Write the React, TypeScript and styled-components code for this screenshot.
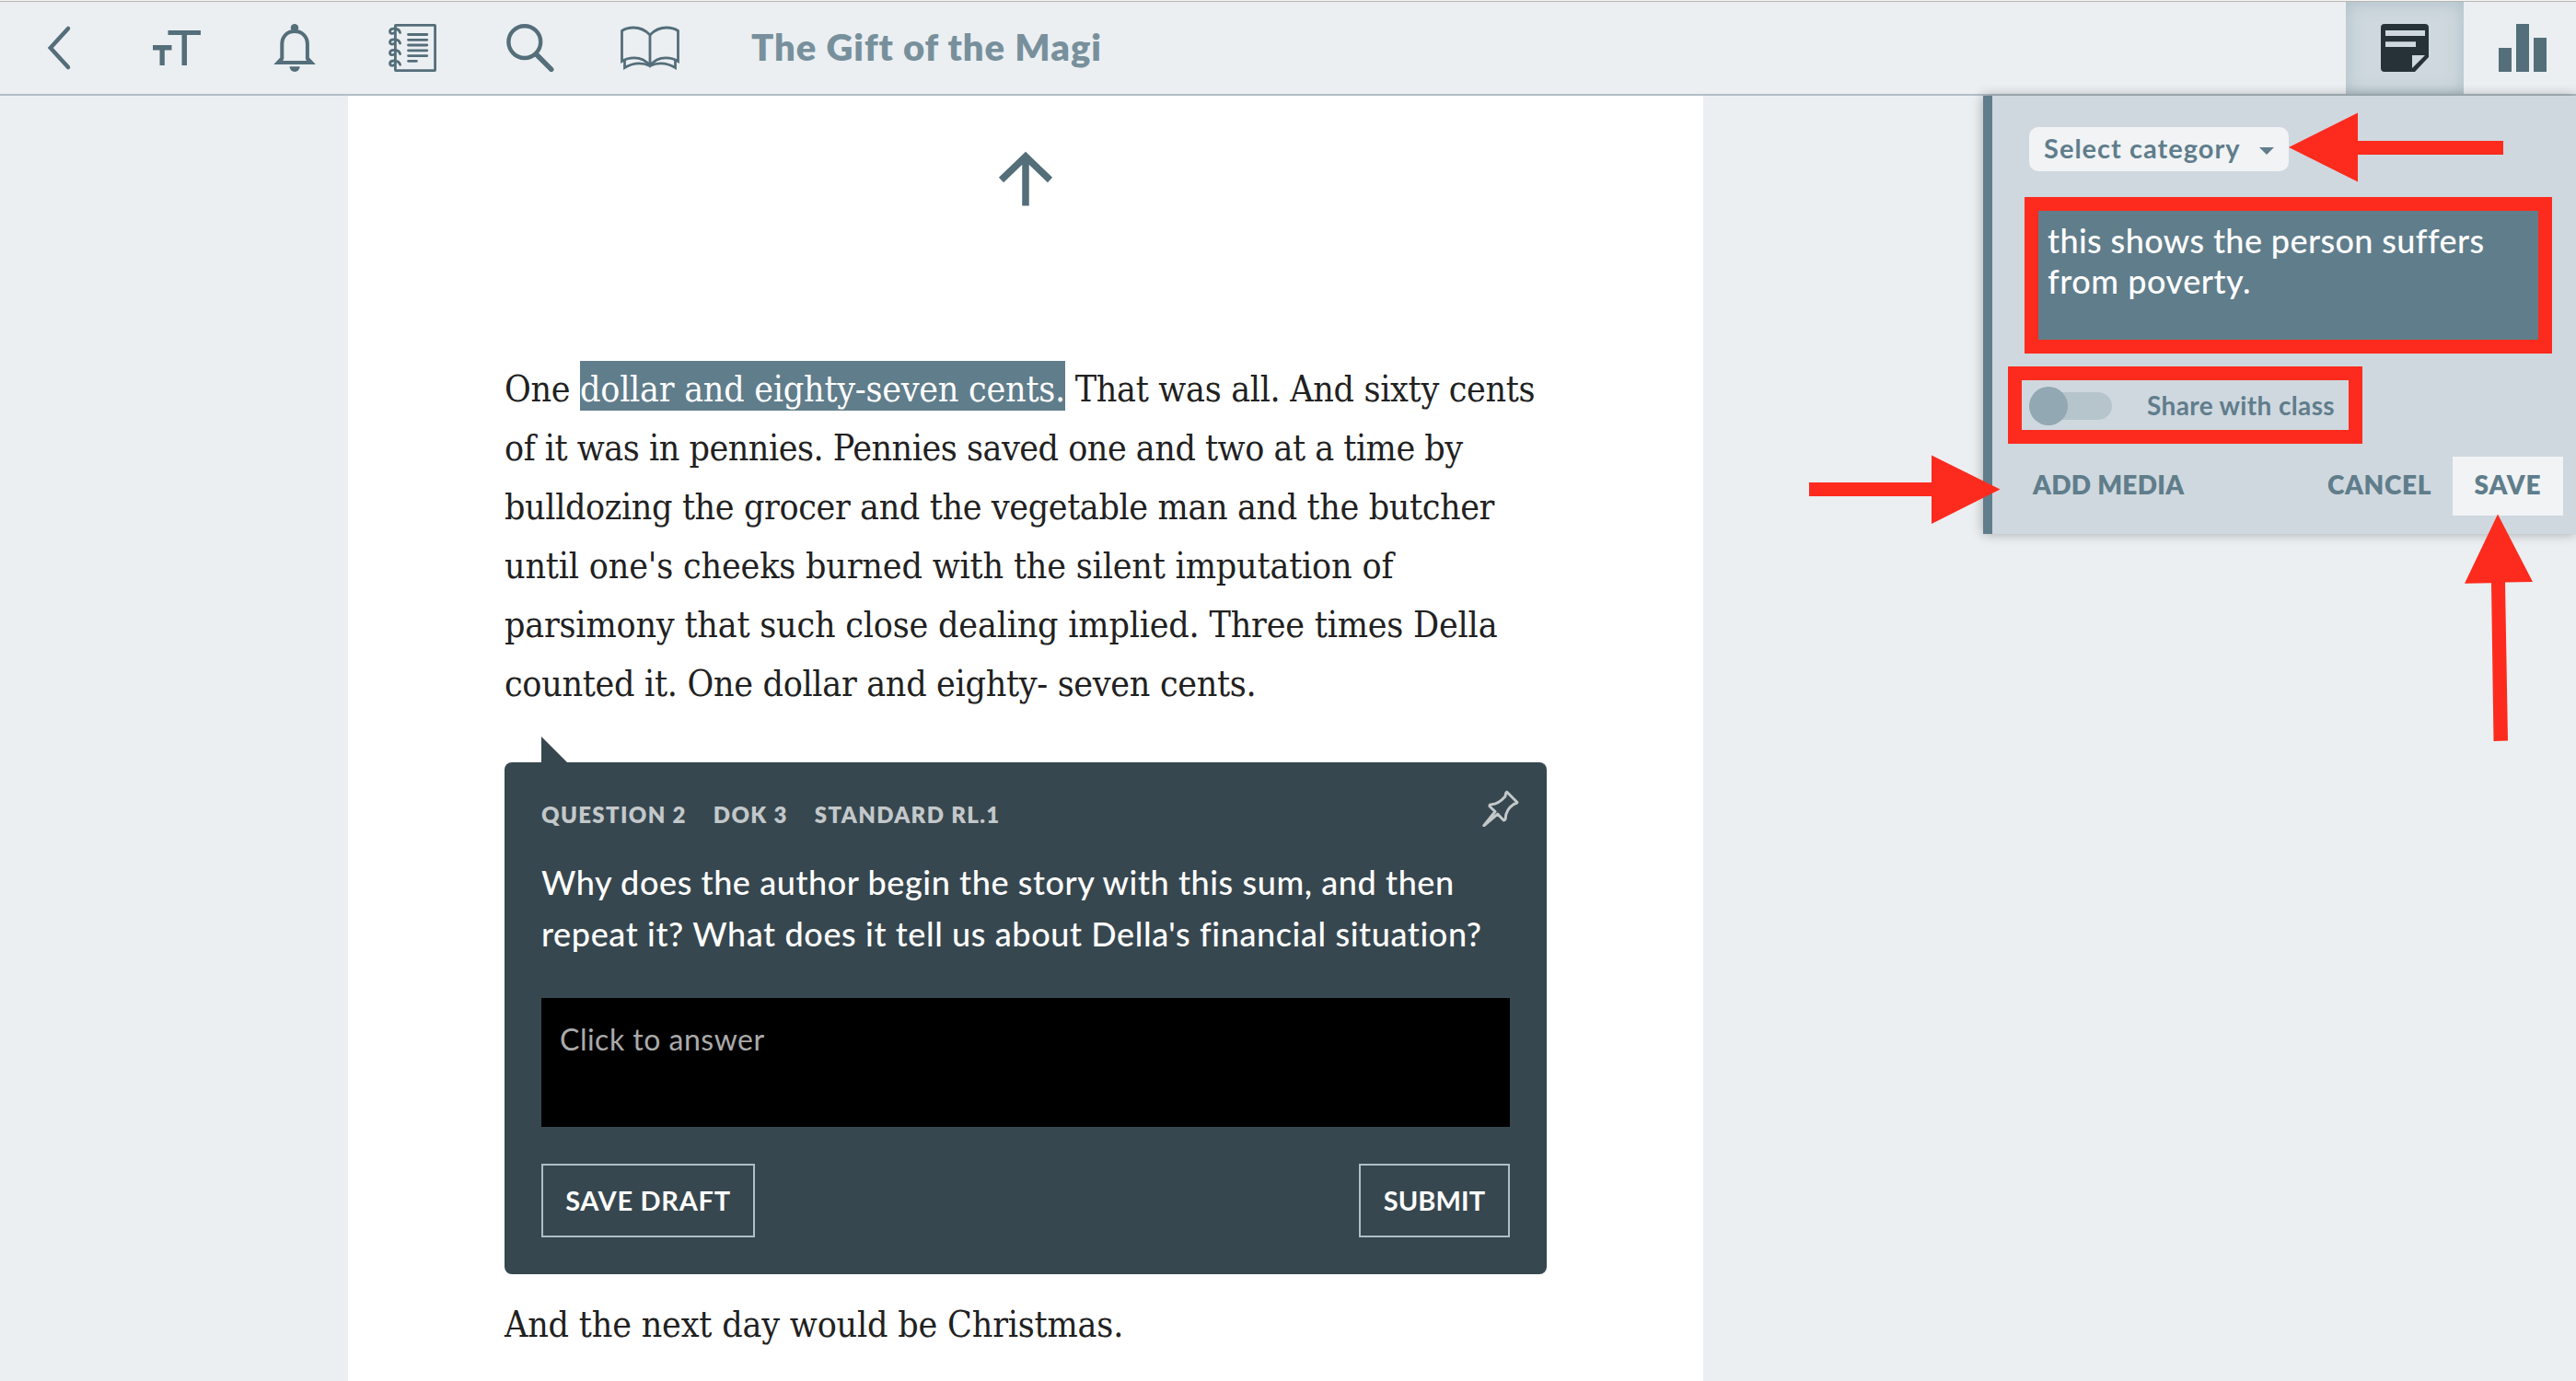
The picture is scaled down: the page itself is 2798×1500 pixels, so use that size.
import React, {FC} from 'react';
import styled, {createGlobalStyle} from 'styled-components';

const GlobalStyle = createGlobalStyle`
  * {
    box-sizing: border-box;
  }

  body {
    margin: 0;
    background: #ebeff2;
    font-family: Lato, "Open Sans", sans-serif;
  }

  button {
    font-family: inherit;
    background: none;
    border: 0;
    margin: 0;
    padding: 0;
  }
`;

const App = styled.div`
  position: relative;
  height: 1500px;
  overflow: hidden;
  display: flex;
  flex-direction: column;
`;

const Header = styled.header`
  height: 104px;
  flex: none;
  display: flex;
  color: #546e7a;
  background: #ebeff2;
  border-top: 2px solid #b5b6b3;
  border-bottom: 2px solid #b0bec5;
  border-image: linear-gradient(#f4f4f3 1px, #b5b6b3 1px, #b5b6b3 2px, #b0bec5 2px) 2 0;
`;

const IconButton = styled.button<{ $width?: number }>`
  width: ${props => props.$width || 128}px;
  flex: none;
  display: flex;
  align-items: center;
  justify-content: center;
  color: inherit;
`;

const Title = styled.h1`
  margin: 0 auto 0 44px;
  font-size: 40px;
  font-weight: 800;
  line-height: 98px;
  letter-spacing: 0.95px;
  color: #78909c;
`;

const Tab = styled(IconButton)<{ $active?: boolean }>`
  color: ${props => props.$active ? '#263238' : '#546e7a'};
  background: ${props => props.$active ? '#cfd8df' : 'transparent'};
  box-shadow: ${props => props.$active ? 'inset 0 0 20px rgba(84, 125, 132, 0.28)' : 'none'};

  &:last-child {
    margin-right: -6px;
  }
`;

const Main = styled.main`
  flex: 1;
  display: flex;
  align-items: flex-start;
`;

const Page = styled.article`
  width: 1472px;
  height: 100%;
  margin-left: 378px;
  padding: 60px 170px 0;
  background: #fff;
`;

const PageUp = styled.div`
  display: flex;
  justify-content: center;
  margin-bottom: 167px;
  color: #546e7a;
`;

const Paragraph = styled.p`
  margin: 0;
  font-family: "DejaVu Serif Condensed", "DejaVu Serif", serif;
  font-stretch: condensed;
  font-size: 39px;
  line-height: 64px;
  color: #212121;
`;

const Line = styled.span<{ $track: number }>`
  display: block;
  white-space: nowrap;
  letter-spacing: ${props => props.$track}px;
`;

const Highlight = styled.mark`
  padding: 8px 0 1px;
  letter-spacing: -0.24px;
  color: #fff;
  background: #607d8b;
`;

const Question = styled.section`
  position: relative;
  height: 556px;
  margin: 53px 0 23px;
  padding: 40px;
  color: #fff;
  background: #37474f;
  border-radius: 8px;

  &::before {
    content: '';
    position: absolute;
    left: 40px;
    top: -28px;
    border-left: 28px solid #37474f;
    border-top: 28px solid transparent;
  }
`;

const Meta = styled.div`
  display: flex;
  gap: 29px;
  font-size: 24px;
  font-weight: 800;
  line-height: 34px;
  letter-spacing: 1.35px;
  color: #c3c8ca;
`;

const Pin = styled.button`
  position: absolute;
  top: 30px;
  right: 30px;
  display: flex;
  color: #c3c8ca;
`;

const Prompt = styled.div`
  margin: 28px 0 42px;
  font-size: 36px;
  font-weight: 500;
  line-height: 56px;
`;

const Answer = styled.div`
  height: 140px;
  padding: 25px 20px;
  font-size: 32px;
  line-height: 40px;
  letter-spacing: 0.5px;
  color: #aaa;
  background: #000;
`;

const QuestionActions = styled.div`
  display: flex;
  justify-content: space-between;
  margin-top: 40px;
`;

const OutlineButton = styled.button<{ $width: number; $track: number }>`
  width: ${props => props.$width}px;
  height: 80px;
  padding-bottom: 2px;
  font-size: 29px;
  font-weight: 700;
  letter-spacing: ${props => props.$track}px;
  color: #fff;
  border: 2px solid #b0bec5;
`;

const Panel = styled.aside`
  position: relative;
  width: 644px;
  height: 476px;
  margin-left: auto;
  padding: 34px 14px 20px 40px;
  color: #607d8b;
  background: #cfd8df;
  border-left: 10px solid #607d8b;
  box-shadow: 0 0 12px rgba(0, 0, 0, 0.3);
  clip-path: inset(-12px 0 -20px -20px);
`;

const Category = styled.button`
  width: 282px;
  height: 48px;
  padding: 0 16px 3px 16px;
  display: flex;
  align-items: center;
  justify-content: space-between;
  font-size: 29px;
  font-weight: 700;
  letter-spacing: 1.02px;
  color: inherit;
  background: #f1f3f5;
  border-radius: 10px;
`;

const Caret = styled.span`
  margin-top: 7px;
  border: 8px solid transparent;
  border-top-color: currentColor;
  border-bottom: 0;
`;

const Note = styled.div`
  width: 560px;
  height: 158px;
  margin: 34px 0 42px;
  padding: 19px 20px;
  font-size: 36px;
  font-weight: 500;
  line-height: 44px;
  color: #fff;
  background: #607d8b;
`;

const Share = styled.label`
  height: 42px;
  display: flex;
  align-items: center;
  gap: 38px;
`;

const Toggle = styled.span`
  width: 90px;
  height: 42px;
  padding: 6px 0 6px 8px;
  position: relative;

  &::before {
    content: '';
    display: block;
    height: 30px;
    border-radius: 15px;
    background: #b6c4cc;
  }

  &::after {
    content: '';
    position: absolute;
    left: 0;
    top: 0;
    width: 42px;
    height: 42px;
    border-radius: 50%;
    background: #92a8b3;
  }
`;

const ShareLabel = styled.span`
  padding-bottom: 3px;
  font-size: 28px;
  font-weight: 700;
  letter-spacing: 0.36px;
`;

const PanelActions = styled.div`
  display: flex;
  margin-top: 34px;
`;

const TextButton = styled.button<{ $track: number }>`
  height: 64px;
  padding: 0 4px 5px;
  font-size: 28px;
  font-weight: 800;
  letter-spacing: ${props => props.$track}px;
  color: inherit;

  &:first-child {
    margin-right: auto;
  }
`;

const SaveButton = styled(TextButton)`
  width: 120px;
  margin-left: 19px;
  background: #f1f3f5;
`;

const Callout = styled.div<{ $x: number; $y: number; $w: number; $h: number }>`
  position: absolute;
  left: ${props => props.$x}px;
  top: ${props => props.$y}px;
  width: ${props => props.$w}px;
  height: ${props => props.$h}px;
  border: 15px solid #fd2b1d;
`;

const Arrows = styled.svg`
  position: absolute;
  left: 1950px;
  top: 110px;
  fill: #fd2b1d;
`;

const Icon: FC<{ width?: number; stroke?: number; children: React.ReactNode }> = ({width = 52, stroke = 4, children}) => (
  <svg width={width} height={52} viewBox={`0 0 ${width} 52`} fill="none" stroke="currentColor" strokeWidth={stroke}>
    {children}
  </svg>
);

const Reader: FC = () => (
  <App>
    <GlobalStyle />
    <Header>
      <IconButton>
        <Icon stroke={4.5}>
          <path d="M36 5L16.8 26L36 47" strokeLinecap="round" />
        </Icon>
      </IconButton>
      <IconButton>
        <Icon stroke={0}>
          <path fill="currentColor" d="M16.5 7H52V12H37V45H31.5V12H16.5ZM0 23H20.5V28.5H12.8V45H7.5V28.5H0Z" />
        </Icon>
      </IconButton>
      <IconButton>
        <Icon stroke={4}>
          <circle cx="26" cy="4.2" r="4.2" fill="currentColor" stroke="none" />
          <path d="M8 42L12.3 37.5V22C12.3 13.5 18 8 26 8S39.9 13.5 39.9 22V37.5L44.2 42Z" />
          <path d="M4.5 43.9L10 37.5L14 40V43.9ZM47.7 43.9L42.2 37.5L38 40V43.9Z" fill="currentColor" stroke="none" />
          <path d="M20.5 46.3H31.7A5.6 5.6 0 0 1 20.5 46.3Z" fill="currentColor" stroke="none" />
        </Icon>
      </IconButton>
      <IconButton>
        <Icon stroke={2.8}>
          <rect x="7.4" y="1.4" width="43.2" height="49.2" rx="0.5" />
          <path d="M21.5 11.5H41.8M21.5 17.3H41.8M21.5 23H41.8M21.5 28.8H41.8M21.5 34.6H41.8M21.5 40.3H30.5" strokeLinecap="round" />
          {[0, 11.6, 23.2, 34.8].map(y => (
            <path
              key={y}
              transform={`translate(0 ${y})`}
              d="M12.6 9.5C11.5 4.2 2 4 1.5 8C1.5 10.7 4.5 11 6.3 9.6"
              strokeLinecap="round"
            />
          ))}
        </Icon>
      </IconButton>
      <IconButton>
        <Icon stroke={4.4}>
          <circle cx="19.8" cy="19.6" r="17.4" />
          <path d="M32.5 33L48.8 49.4" strokeWidth="5.4" strokeLinecap="round" />
        </Icon>
      </IconButton>
      <IconButton $width={132}>
        <Icon width={64} stroke={2.8}>
          <path d="M32 45.5V12C26 5.5 20 4 14 4C9 4 4.5 5.5 1.5 7.5V40.5C6 37.5 11 36.8 15 36.8C22 36.8 28 40 32 45.5C36 40 42 36.8 49 36.8C53 36.8 58 37.5 62.5 40.5V7.5C59.5 5.5 55 4 50 4C44 4 38 5.5 32 12" />
          <path d="M4.5 39.5V47.5C14 42 24 42 32 45.5C40 42 50 42 59.5 47.5V39.5" />
        </Icon>
      </IconButton>
      <Title>The Gift of the Magi</Title>
      <Tab $active>
        <Icon stroke={0}>
          <path fill="currentColor" fillRule="evenodd" d="M4 0H48A4 4 0 0 1 52 4V36L37 52H4A4 4 0 0 1 0 48V4A4 4 0 0 1 4 0ZM5 7V13H48V7ZM5 19.3V25H38V19.3ZM34 34V48L48 34Z" />
        </Icon>
      </Tab>
      <Tab>
        <Icon stroke={0}>
          <path fill="currentColor" d="M0 26H14V52H0ZM19 0H33V52H19ZM38 15H52V52H38Z" />
        </Icon>
      </Tab>
    </Header>

    <Main>
      <Page>
        <PageUp>
          <svg width="60" height="60" fill="none" stroke="currentColor" strokeWidth="7.5">
            <path d="M3.5 31.5L30 6L56.5 31.5M30 8V59.5" />
          </svg>
        </PageUp>
        <Paragraph>
          <Line $track={-0.31}>One <Highlight>dollar and eighty-seven cents.</Highlight> That was all. And sixty cents</Line>
          <Line $track={-0.48}>of it was in pennies. Pennies saved one and two at a time by</Line>
          <Line $track={-0.37}>bulldozing the grocer and the vegetable man and the butcher</Line>
          <Line $track={-0.17}>until one's cheeks burned with the silent imputation of</Line>
          <Line $track={-0.19}>parsimony that such close dealing implied. Three times Della</Line>
          <Line $track={-0.3}>counted it. One dollar and eighty- seven cents.</Line>
        </Paragraph>
        <Question>
          <Meta>
            <span>QUESTION 2</span>
            <span>DOK 3</span>
            <span>STANDARD RL.1</span>
          </Meta>
          <Pin>
            <svg width="40" height="40" fill="none" stroke="currentColor" strokeWidth="3" strokeLinejoin="round">
              <path d="M26.8 2.2L38 13.5C37.5 15 36 15 34.5 15.2C29 19 25.5 24 25.3 30.5C25 33 23.5 33.5 22.5 32.3L16.8 26.2L1.8 38.8L14 23.5L8.2 18C7.5 16.5 8.5 15.8 10 15.8C16 15.5 21 11.5 25 7C25.5 5 25 3 26.8 2.2Z" />
            </svg>
          </Pin>
          <Prompt>
            <Line $track={0.58}>Why does the author begin the story with this sum, and then</Line>
            <Line $track={0.61}>repeat it? What does it tell us about Della's financial situation?</Line>
          </Prompt>
          <Answer>Click to answer</Answer>
          <QuestionActions>
            <OutlineButton $width={232} $track={0.72}>SAVE DRAFT</OutlineButton>
            <OutlineButton $width={164} $track={0.1}>SUBMIT</OutlineButton>
          </QuestionActions>
        </Question>
        <Paragraph>
          <Line $track={-0.18}>And the next day would be Christmas.</Line>
        </Paragraph>
      </Page>

      <Panel>
        <Category>
          Select category
          <Caret />
        </Category>
        <Note>
          <Line $track={0.39}>this shows the person suffers</Line>
          <Line $track={0.53}>from poverty.</Line>
        </Note>
        <Share>
          <Toggle />
          <ShareLabel>Share with class</ShareLabel>
        </Share>
        <PanelActions>
          <TextButton $track={0.3}>ADD MEDIA</TextButton>
          <TextButton $track={0.65}>CANCEL</TextButton>
          <SaveButton $track={1}>SAVE</SaveButton>
        </PanelActions>
      </Panel>
    </Main>

    <Callout $x={2199} $y={214} $w={573} $h={170} />
    <Callout $x={2181} $y={398} $w={385} $h={84} />
    <Arrows width="848" height="710" viewBox="1950 110 848 710">
      <path d="M2486 160L2561 122.5V153H2719V168H2561V197.5Z" />
      <path d="M2172.5 531.5L2098 569V539H1965V524H2098V494.5Z" />
      <path d="M2713 558.5L2751 632L2721 632.6L2724 804.5L2708.5 805L2706 633.2L2677 633.7Z" />
    </Arrows>
  </App>
);

export default Reader;
